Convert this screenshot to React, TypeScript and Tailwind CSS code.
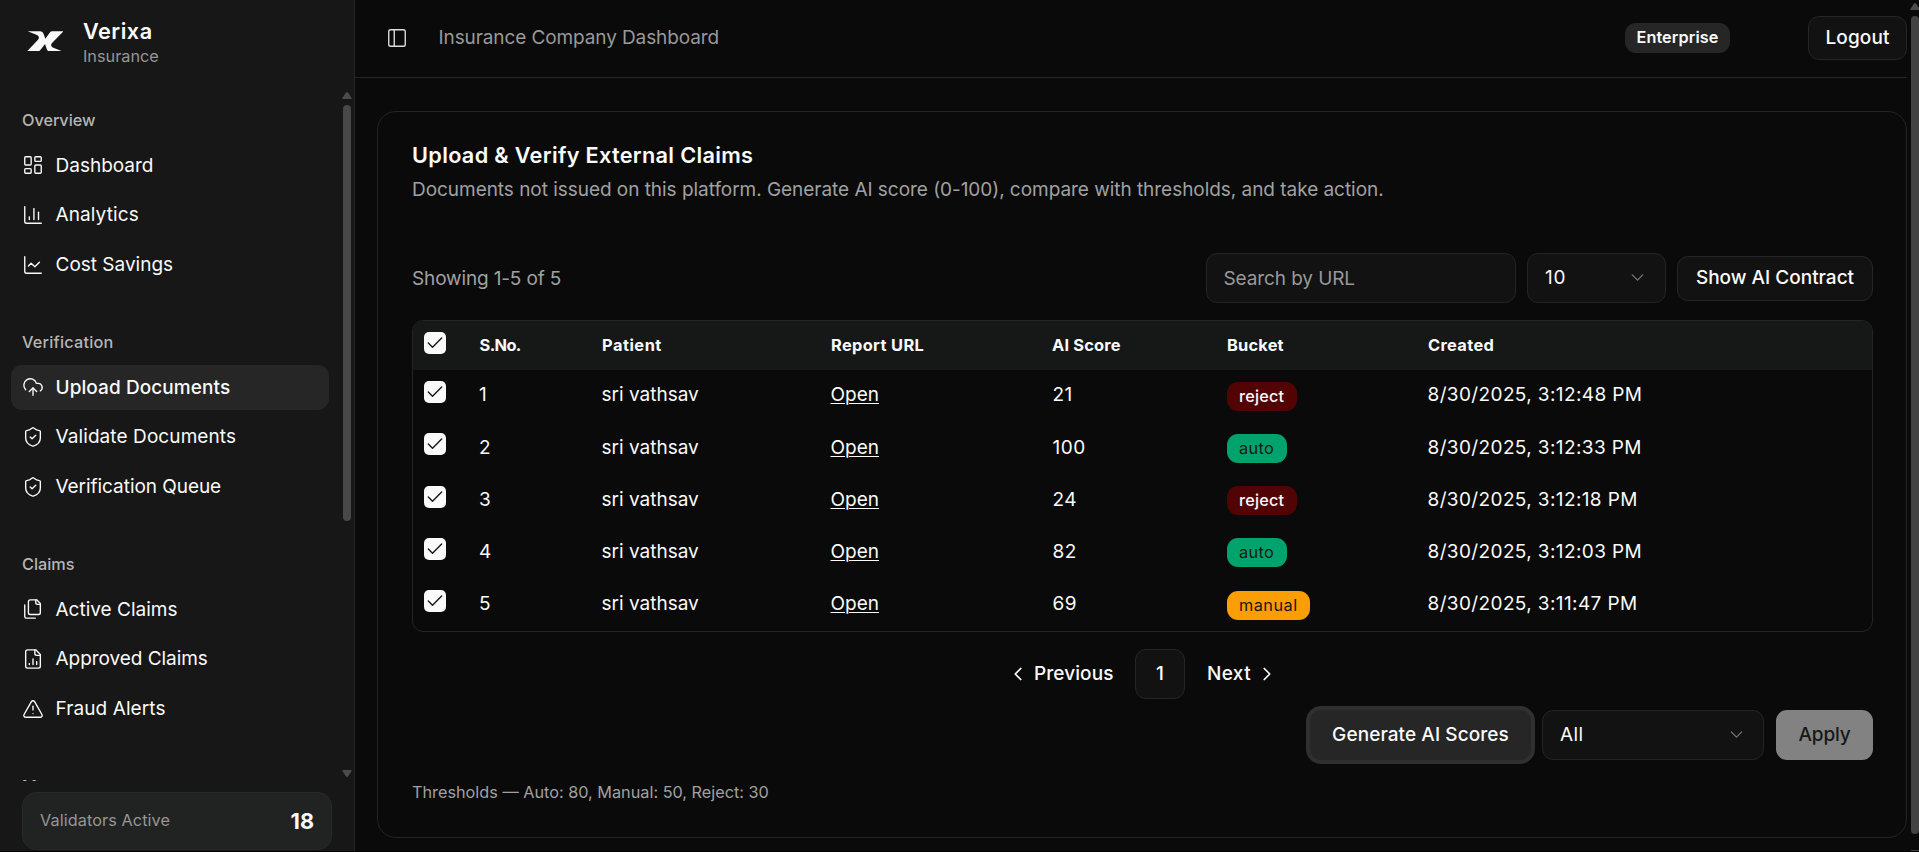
import type { ComponentType, ReactNode } from "react";
import {
  ChartColumn,
  ChartLine,
  Check,
  ChevronDown,
  ChevronLeft,
  ChevronRight,
  CloudUpload,
  LayoutDashboard,
  PanelLeft,
  ShieldCheck,
  TriangleAlert,
} from "lucide-react";
import { clsx } from "clsx";

type IconProps = { size?: number; strokeWidth?: number };
type NavItem = { label: string; icon: ComponentType<IconProps>; active?: boolean; tracking?: string };

function StrokeIcon({ size = 22, strokeWidth = 1.5, paths }: IconProps & { paths: string[] }) {
  return (
    <svg
      width={size}
      height={size}
      viewBox="0 0 24 24"
      fill="none"
      stroke="currentColor"
      strokeWidth={strokeWidth}
      strokeLinecap="round"
      strokeLinejoin="round"
    >
      {paths.map((d) => (
        <path key={d} d={d} />
      ))}
    </svg>
  );
}

function FilesIcon(props: IconProps) {
  return (
    <StrokeIcon
      {...props}
      paths={[
        "M20 7h-3a2 2 0 0 1-2-2V2",
        "M9 18a2 2 0 0 1-2-2V4a2 2 0 0 1 2-2h7l4 4v10a2 2 0 0 1-2 2Z",
        "M3 7.6v12.8A1.6 1.6 0 0 0 4.6 22h9.8",
      ]}
    />
  );
}

function FileChartIcon(props: IconProps) {
  return (
    <StrokeIcon
      {...props}
      paths={[
        "M15 2H6a2 2 0 0 0-2 2v16a2 2 0 0 0 2 2h12a2 2 0 0 0 2-2V7Z",
        "M14 2v4a2 2 0 0 0 2 2h4",
        "M8 18v-1",
        "M12 18v-6",
        "M16 18v-3",
      ]}
    />
  );
}

const groups: { title: string; items: NavItem[]; tracking?: string }[] = [
  {
    title: "Overview",
    tracking: "tracking-[-0.05px]",
    items: [
      { label: "Dashboard", icon: LayoutDashboard },
      { label: "Analytics", icon: ChartColumn, tracking: "tracking-[0.1px]" },
      { label: "Cost Savings", icon: ChartLine },
    ],
  },
  {
    title: "Verification",
    tracking: "tracking-[0.2px]",
    items: [
      { label: "Upload Documents", icon: CloudUpload, active: true, tracking: "tracking-[0.08px]" },
      { label: "Validate Documents", icon: ShieldCheck, tracking: "tracking-[0.09px]" },
      { label: "Verification Queue", icon: ShieldCheck, tracking: "tracking-[-0.05px]" },
    ],
  },
  {
    title: "Claims",
    items: [
      { label: "Active Claims", icon: FilesIcon },
      { label: "Approved Claims", icon: FileChartIcon, tracking: "tracking-[-0.05px]" },
      { label: "Fraud Alerts", icon: TriangleAlert, tracking: "tracking-[0.09px]" },
    ],
  },
  { title: "Management", items: [] },
];

type Bucket = "reject" | "auto" | "manual";

const rows: { id: number; score: number; bucket: Bucket; created: string }[] = [
  { id: 1, score: 21, bucket: "reject", created: "8/30/2025, 3:12:48 PM" },
  { id: 2, score: 100, bucket: "auto", created: "8/30/2025, 3:12:33 PM" },
  { id: 3, score: 24, bucket: "reject", created: "8/30/2025, 3:12:18 PM" },
  { id: 4, score: 82, bucket: "auto", created: "8/30/2025, 3:12:03 PM" },
  { id: 5, score: 69, bucket: "manual", created: "8/30/2025, 3:11:47 PM" },
];

const bucketStyle: Record<Bucket, string> = {
  reject: "bg-[#520404] text-[#fafafa] font-medium tracking-[0.2px]",
  auto: "bg-[#00a36c] text-[#171717] tracking-[0.4px]",
  manual: "bg-[#fb9d05] text-[#171717] tracking-[0.5px]",
};

const tableGrid = "grid grid-cols-[55px_122.5px_229px_221px_175px_201px_1fr] pl-[11px]";

function Logo() {
  return (
    <svg viewBox="0 0 109 61" className="h-[20.4px] w-[36.4px]" fill="#fafafa">
      <path d="M2 1H38C45 1 48 4 50 10L55 23L68 5C71 1 74 1 78 1H109L75 36C70 41 72 47 79 50L106 61H68C62 61 60 57 58 51L54 39L40 57C37 61 34 61 30 61H0L33 26C38 20 36 14 28 11Z" />
    </svg>
  );
}

function Checkbox() {
  return (
    <span className="flex size-[22px] items-center justify-center rounded-[5px] bg-[#fafafa] text-[#171717]">
      <Check size={20} strokeWidth={1.7} />
    </span>
  );
}

function Arrow({ down }: { down?: boolean }) {
  return (
    <svg viewBox="0 0 10 7" className="h-[7px] w-[10px] shrink-0" fill="#4b4b4b">
      <path d={down ? "M1 0h8q1 0 .6 1L6 6.4q-1 1-2 0L.4 1Q0 0 1 0Z" : "M1 7h8q1 0 .6-1L6 .6q-1-1-2 0L.4 6Q0 7 1 7Z"} />
    </svg>
  );
}

function Sidebar() {
  return (
    <aside className="flex w-[355px] shrink-0 flex-col border-r border-[#262626] bg-[#171717]">
      <div className="flex h-[90px] shrink-0 items-start gap-[20px] pl-[26.6px] pt-[17px]">
        <div className="pt-[13.8px]">
          <Logo />
        </div>
        <div>
          <p className="text-[21.7px] font-semibold leading-[28px] tracking-[0.5px]">Verixa</p>
          <p className="text-[16.25px] leading-[22px] text-[#969696]">Insurance</p>
        </div>
      </div>

      <div className="flex h-[691px] shrink-0 overflow-hidden">
        <nav className="flex flex-1 flex-col gap-[33.4px] pl-[11px] pt-[8.6px]">
          {groups.map((g) => (
            <section key={g.title} className="shrink-0">
              <h2
                className={clsx(
                  "flex h-[44.5px] items-center pb-[1.6px] pl-[11px] text-[16.25px] font-medium text-[#b5b5b5]",
                  g.tracking,
                )}
              >
                {g.title}
              </h2>
              <ul className="flex flex-col gap-[5.3px]">
                {g.items.map(({ label, icon: Icon, active, tracking }) => (
                  <li
                    key={label}
                    className={clsx(
                      "flex h-[44.5px] w-[318px] items-center gap-[11.5px] rounded-[11px] pl-[11px] text-[19px]",
                      active && "bg-[#262626] font-medium",
                      tracking,
                    )}
                  >
                    <Icon size={22} strokeWidth={1.5} />
                    <span className="pt-px">{label}</span>
                  </li>
                ))}
              </ul>
            </section>
          ))}
        </nav>
        <div className="flex w-[14px] flex-col items-center pb-[4px] pt-[2px]">
          <Arrow />
          <div className="mt-[6px] h-[416px] w-2 rounded-full bg-[#484848]" />
          <div className="flex-1" />
          <Arrow down />
        </div>
      </div>

      <div className="ml-[22px] mt-[11px] flex h-[58px] w-[310px] shrink-0 items-center justify-between rounded-[14px] border border-[#272928] bg-[#212322] px-[17px]">
        <span className="pb-px text-[16.25px] tracking-[0.08px] text-[#969696]">Validators Active</span>
        <span className="text-[21.7px] font-bold">18</span>
      </div>
    </aside>
  );
}

function Header() {
  return (
    <header className="flex h-[78px] shrink-0 items-start border-b border-[#262626] pt-4">
      <div className="flex h-11 flex-1 items-center pl-[31px]">
        <PanelLeft size={22} strokeWidth={1.5} className="text-[#dedede]" />
        <h1 className="ml-[30.5px] text-[19px] tracking-[-0.1px] text-[#999999]">Insurance Company Dashboard</h1>
      </div>
      <span className="mr-[78px] mt-[7px] flex h-[30px] w-[105px] items-center justify-center rounded-[11px] bg-[#262626] pb-px text-[16.25px] font-semibold tracking-[0.1px]">
        Enterprise
      </span>
      <button className="h-11 w-[99px] rounded-[11px] border border-[#262626] bg-[#121212] text-[19px] font-medium tracking-[0.12px]">
        Logout
      </button>
    </header>
  );
}

function SelectBox({ value, className }: { value: string; className: string }) {
  return (
    <div
      className={clsx(
        "flex h-[50px] items-center justify-between rounded-[11px] border border-[#242424] bg-[#121212] pl-[17px] text-[19px]",
        className,
      )}
    >
      <span className="pt-0.5">{value}</span>
      <ChevronDown size={21} strokeWidth={1.5} className="text-[#777777]" />
    </div>
  );
}

function Head({ children, className }: { children: ReactNode; className?: string }) {
  return <div className={clsx("flex items-center pl-[0.5px] text-[16.4px] font-bold", className)}>{children}</div>;
}

function ClaimsTable() {
  return (
    <div className="mt-[17px] h-[312px] overflow-hidden rounded-[11px] border border-[#242424] text-[19px]">
      <div className={clsx(tableGrid, "h-[49px] bg-[#161817]")}>
        <div className="pt-[11px]">
          <Checkbox />
        </div>
        <Head className="tracking-[-0.6px]">S.No.</Head>
        <Head className="tracking-[0.5px]">Patient</Head>
        <Head className="tracking-[0.35px]">Report URL</Head>
        <Head className="tracking-[0.2px]">AI Score</Head>
        <Head className="tracking-[0.2px]">Bucket</Head>
        <Head className="tracking-[0.35px]">Created</Head>
      </div>
      {rows.map((r) => (
        <div key={r.id} className={clsx(tableGrid, "h-[52.2px] leading-[28px]")}>
          <div className="pt-[11.8px]">
            <Checkbox />
          </div>
          <div className="pt-[11.9px]">{r.id}</div>
          <div className="pt-[11.9px]">sri vathsav</div>
          <div className="pt-[11.9px]">
            <a className="underline decoration-1 underline-offset-2">Open</a>
          </div>
          <div className="pl-px pt-[11.9px] tracking-[0.5px]">{r.score}</div>
          <div className="pt-[12.3px]">
            <span
              className={clsx(
                "inline-flex h-[29px] items-center rounded-[11px] px-[12.5px] pb-px text-[16.25px]",
                bucketStyle[r.bucket],
              )}
            >
              {r.bucket}
            </span>
          </div>
          <div className="pt-[11.9px] tracking-[0.38px]">{r.created}</div>
        </div>
      ))}
    </div>
  );
}

function Pagination() {
  return (
    <div className="mt-[17px] flex h-[50px] items-center justify-center text-[19px] font-medium">
      <ChevronLeft size={22} strokeWidth={1.9} />
      <span className="ml-[5px] w-[80px] pt-px tracking-[0.1px]">Previous</span>
      <span className="ml-[21px] flex size-[50px] items-center justify-center rounded-[11px] border border-[#262626] bg-[#121212] pt-px">
        1
      </span>
      <span className="ml-[22px] pt-px tracking-[0.4px]">Next</span>
      <ChevronRight size={22} strokeWidth={1.9} className="ml-[5px]" />
    </div>
  );
}

function ClaimsCard() {
  return (
    <section className="ml-[22px] mt-[33px] h-[727px] rounded-[19px] border border-[#242424] pl-[34px] pr-[33px] pt-[28px]">
      <h2 className="text-[21.7px] font-semibold leading-[30px] tracking-[0.32px]">Upload &amp; Verify External Claims</h2>
      <p className="mt-[5.5px] text-[19px] leading-[28px] tracking-[-0.04px] text-[#a1a1a1]">
        Documents not issued on this platform. Generate AI score (0-100), compare with thresholds, and take action.
      </p>

      <div className="mt-[49px] flex h-[50px] items-center">
        <span className="flex-1 pt-[3px] text-[19px] tracking-[-0.15px] text-[#a1a1a1]">Showing 1-5 of 5</span>
        <div className="flex h-[50px] w-[310px] items-center rounded-[11px] border border-[#242424] bg-[#121212] pl-[16.5px] pt-[3px] text-[19px] tracking-[-0.1px] text-[#999999]">
          Search by URL
        </div>
        <SelectBox value="10" className="ml-[11px] w-[139px] pr-[17px] tracking-[0.7px]" />
        <button className="ml-[11px] mt-px h-[45px] w-[196px] rounded-[11px] border border-[#262626] bg-[#121212] pt-px text-[19px] font-medium">
          Show AI Contract
        </button>
      </div>

      <ClaimsTable />
      <Pagination />

      <div className="mt-[11px] flex h-[50px] items-center justify-end">
        <button className="h-[50px] w-[221px] rounded-[11px] bg-[#262626] pt-px text-[19px] font-medium tracking-[0.08px] ring-4 ring-[#303030]">
          Generate AI Scores
        </button>
        <SelectBox value="All" className="ml-[11px] w-[222px] pr-4 tracking-[0.4px]" />
        <button className="ml-3 h-[50px] w-[97px] rounded-[11px] bg-[#828282] pt-px text-[19px] font-medium tracking-[-0.2px] text-[#171717]">
          Apply
        </button>
      </div>

      <p className="mt-[21px] text-[16.25px] leading-[22px] text-[#a1a1a1]">
        Thresholds — Auto: 80, Manual: 50, Reject: 30
      </p>
    </section>
  );
}

export default function App() {
  return (
    <div className="flex h-[852px] w-full overflow-hidden border-b border-black bg-[#0a0a0a] font-['Inter',sans-serif] text-[#fafafa]">
      <Sidebar />
      <main className="flex min-w-0 flex-1 flex-col">
        <Header />
        <ClaimsCard />
      </main>
      <div className="flex w-3 shrink-0 flex-col items-center pl-1 pt-[3px]">
        <div className="-mx-1">
          <Arrow />
        </div>
        <div className="mt-[6px] h-[818px] w-2 shrink-0 rounded-full bg-[#424242]" />
        <div className="mt-4 h-2 w-2 shrink-0 bg-[#424242]" />
      </div>
    </div>
  );
}
